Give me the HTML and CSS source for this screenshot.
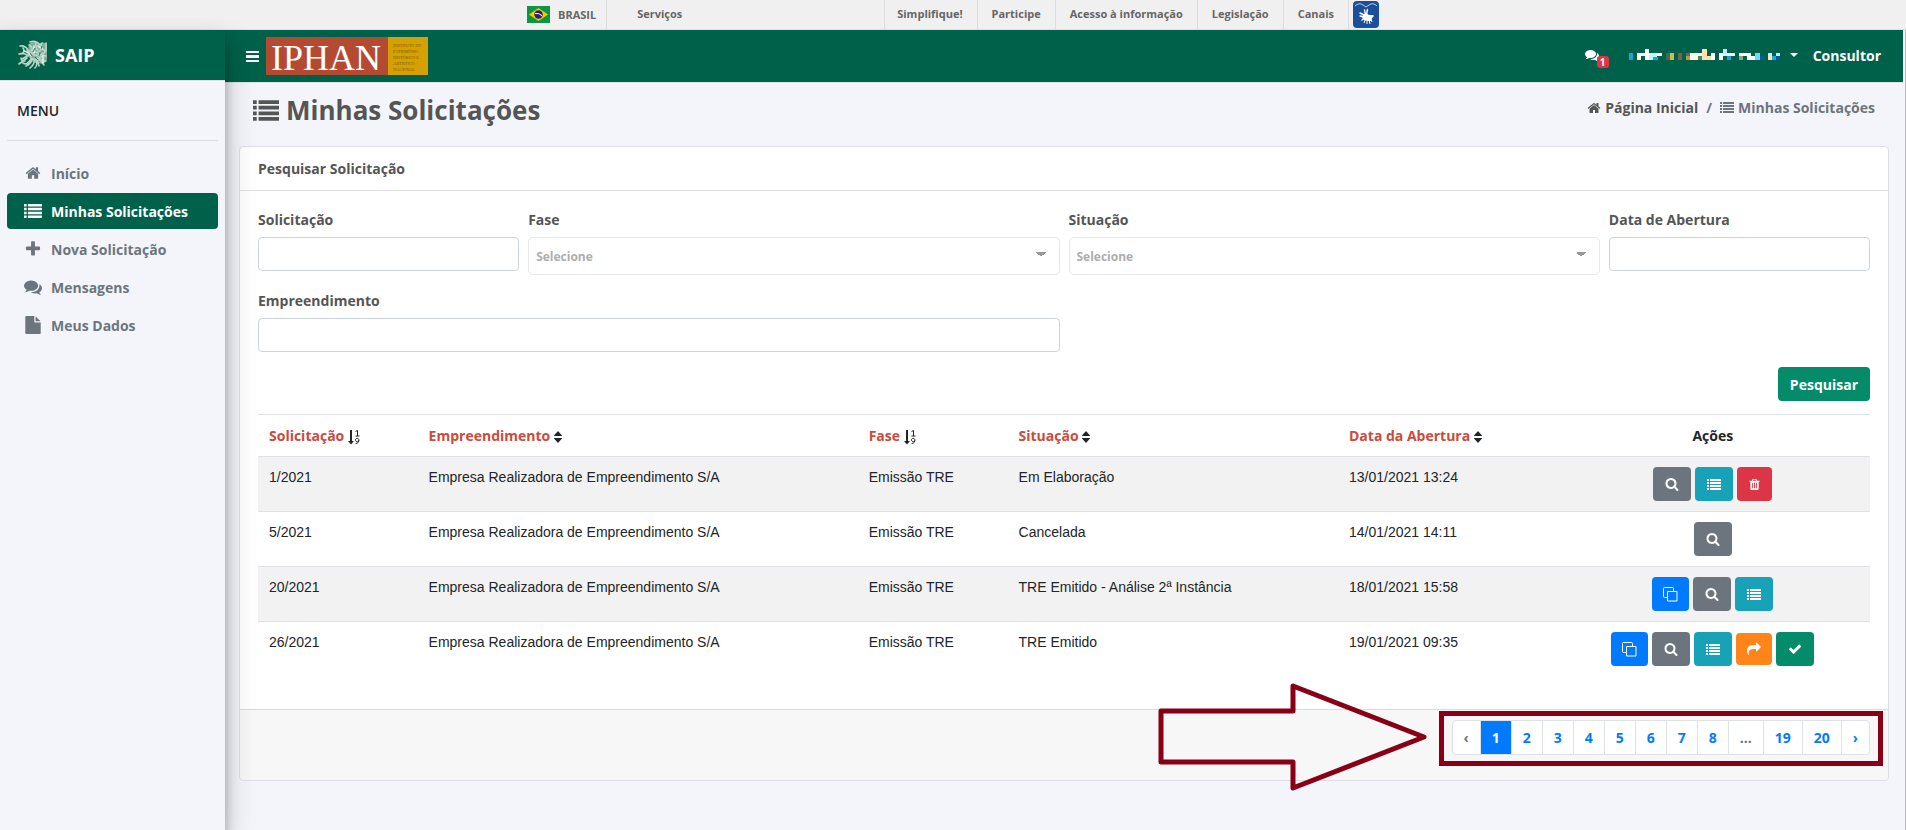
FILE: index.html
```html
<!DOCTYPE html>
<html lang="pt-BR">
<head>
<meta charset="utf-8">
<meta name="viewport" content="width=device-width, initial-scale=1">
<title>SAIP - Minhas Solicitações</title>
<link rel="stylesheet" href="styles.css">
</head>
<body>
<svg class="sprite" aria-hidden="true">
  <symbol id="i-list" viewBox="0 0 28 22"><path d="M0 0h4v4H0zM6 0h22v4H6zM0 6h4v4H0zM6 6h22v4H6zM0 12h4v4H0zM6 12h22v4H6zM0 18h4v4H0zM6 18h22v4H6z"/></symbol>
  <symbol id="i-bars" viewBox="0 0 13 11"><path d="M0 0h13v2H0zM0 4h13v3H0zM0 9h13v2H0z"/></symbol>
  <symbol id="i-home" viewBox="0 0 1792 1792"><path d="M1472 992v480q0 26-19 45t-45 19h-384v-384h-256v384h-384q-26 0-45-19t-19-45v-480q0-1 .5-3t.5-3l575-474 575 474q1 2 1 6zm223-69l-62 74q-8 9-21 11h-3q-13 0-21-7l-692-577-692 577q-12 8-24 7-13-2-21-11l-62-74q-8-10-7-23.500t11-21.500l719-599q32-26 76-26t76 26l244 204v-195q0-14 9-23t23-9h192q14 0 23 9t9 23v408l219 182q10 8 11 21.500t-7 23.500z"/></symbol>
  <symbol id="i-plus" viewBox="0 0 1792 1792"><path d="M1600 736v192q0 40-28 68t-68 28h-416v416q0 40-28 68t-68 28h-192q-40 0-68-28t-28-68v-416h-416q-40 0-68-28t-28-68v-192q0-40 28-68t68-28h416v-416q0-40 28-68t68-28h192q40 0 68 28t28 68v416h416q40 0 68 28t28 68z"/></symbol>
  <symbol id="i-comments" viewBox="0 0 1792 1792"><path d="M1408 768q0 139-94 257t-256.500 186.500-353.500 68.500q-86 0-176-16-124 88-278 128-36 9-86 16h-3q-11 0-20.500-8t-11.500-21q-1-3-1-6.500t.5-6.500 2-6l2.500-5 3.500-5.500 4-5 4.500-5 4-4.500q5-6 23-25t26-29.500 22.500-29 25-38.500 20.500-44q-124-72-195-177t-71-224q0-139 94-257t256.500-186.500 353.500-68.500 353.500 68.500 256.500 186.500 94 257zm384 256q0 120-71 224.500t-195 176.500q10 24 20.500 44t25 38.500 22.500 29 26 29.500 23 25q1 1 4 4.500t4.500 5 4 5 3.500 5.500l2.500 5 2 6 .5 6.500-1 6.500q-3 14-13 22t-22 7q-50-7-86-16-154-40-278-128-90 16-176 16-271 0-472-132 58 4 88 4 161 0 309-45t264-129q125-92 192-212t67-254q0-77-23-152 129 71 204 178t75 230z"/></symbol>
  <symbol id="i-file" viewBox="0 0 1792 1792"><path d="M1152 512v-472q22 14 36 28l408 408q14 14 28 36zm-128 32q0 40 28 68t68 28h544v1056q0 40-28 68t-68 28h-1344q-40 0-68-28t-28-68v-1600q0-40 28-68t68-28h800z"/></symbol>
  <symbol id="i-search" viewBox="0 0 1792 1792"><path d="M1216 832q0-185-131.500-316.500t-316.500-131.500-316.500 131.500-131.500 316.500 131.500 316.500 316.500 131.500 316.500-131.500 131.500-316.500zm512 832q0 52-38 90t-90 38q-54 0-90-38l-343-342q-179 124-399 124-143 0-273.500-55.500t-225-150-150-225-55.500-273.500 55.500-273.500 150-225 225-150 273.500-55.500 273.500 55.500 225 150 150 225 55.500 273.500q0 220-124 399l343 343q37 37 37 90z"/></symbol>
  <symbol id="i-trash" viewBox="0 0 1792 1792"><path d="M704 1376v-704q0-14-9-23t-23-9h-64q-14 0-23 9t-9 23v704q0 14 9 23t23 9h64q14 0 23-9t9-23zm256 0v-704q0-14-9-23t-23-9h-64q-14 0-23 9t-9 23v704q0 14 9 23t23 9h64q14 0 23-9t9-23zm256 0v-704q0-14-9-23t-23-9h-64q-14 0-23 9t-9 23v704q0 14 9 23t23 9h64q14 0 23-9t9-23zm-544-992h448l-48-117q-7-9-17-11h-317q-10 2-17 11zm928 32v64q0 14-9 23t-23 9h-96v948q0 83-47 143.500t-113 60.500h-832q-66 0-113-58.500t-47-141.500v-952h-96q-14 0-23-9t-9-23v-64q0-14 9-23t23-9h309l70-167q15-37 54-63t79-26h320q40 0 79 26t54 63l70 167h309q14 0 23 9t9 23z"/></symbol>
  <symbol id="i-share" viewBox="0 0 1792 1792"><path d="M1792 640q0 26-19 45l-512 512q-19 19-45 19t-45-19-19-45v-256h-224q-98 0-175.500 6t-154 21.500-133 42.500-105.500 69.500-80 101-48.500 138.500-17.500 181q0 55 5 123 0 6 2.500 23.500t2.500 26.500q0 15-8.500 25t-23.500 10q-16 0-28-17-7-9-13-22t-13.500-30-10.500-24q-127-285-127-451 0-199 53-333 162-403 875-403h224v-256q0-26 19-45t45-19 45 19l512 512q19 19 19 45z"/></symbol>
  <symbol id="i-check" viewBox="0 0 1792 1792"><path d="M1671 566q0 40-28 68l-724 724-136 136q-28 28-68 28t-68-28l-136-136-362-362q-28-28-28-68t28-68l136-136q28-28 68-28t68 28l294 295 656-657q28-28 68-28t68 28l136 136q28 28 28 68z"/></symbol>
  <symbol id="i-clone" viewBox="0 0 15 15"><path d="M4.500 4.500h9.500v9.500H4.500zM4 10.500H1.500a1 1 0 0 1-1-1v-8a1 1 0 0 1 1-1h8a1 1 0 0 1 1 1V4" fill="none" stroke="currentColor"/></symbol>
  <symbol id="i-sort" viewBox="0 0 8 12"><path d="M4 0l4 4.500v.5H0v-.5zM4 12L8 7.500V7H0v.5z"/></symbol>
  <symbol id="i-numeric" viewBox="0 0 12 15"><path d="M2 0h2v11h2L3 14.500 0 11h2z"/><path d="M7.500 1.500L9.500.5V6M7.500 6h4M10.800 10.500a1.700 1.700 0 1 1 0-1c.3 2-.6 4-3.200 4" fill="none" stroke="currentColor"/></symbol>
</svg>

<header class="gov">
  <nav class="gov-inner" aria-label="Barra Brasil">
    <a class="gov-brasil" href="#">
      <svg class="flag" viewBox="0 0 23 17" aria-hidden="true"><rect width="23" height="17" fill="#0a9646"/><path d="M2 8.500L11.500 2 21 8.500 11.500 15z" fill="#fcc800"/><circle cx="11.500" cy="8.500" r="4.200" fill="#2b1f78"/><path d="M8 7.500q4-.8 7 2.200" stroke="#fff" fill="none"/></svg>
      BRASIL</a>
    <a class="gov-servicos" href="#">Serviços</a>
    <a class="gov-link" href="#">Simplifique!</a>
    <a class="gov-link" href="#">Participe</a>
    <a class="gov-link" href="#">Acesso à informação</a>
    <a class="gov-link" href="#">Legislação</a>
    <a class="gov-link" href="#">Canais</a>
    <a class="gov-libras" href="#" aria-label="VLibras">
      <svg class="libras" viewBox="0 0 26 27" aria-hidden="true"><rect width="26" height="27" rx="4" fill="#1b4f9c"/><path d="M2 5q4-4 8-1l3 2 3-2q4-3 8 1" stroke="#b9cbe6" fill="none"/><path d="M11.500 9l1 5M14.500 8.500l-1 5M7 12l4 2M7 15l4 1M9 19l4-3" stroke="#fff" stroke-width="1.400" fill="none" stroke-linecap="round"/><path d="M10 14l3-2 3 2 4 0 1 1-2 2-1 3-4 0-3-1-2-2z" fill="#fff"/><path d="M12 19l-1 3M14 20l0 3M16 19l1 4M18 18l1 3" stroke="#fff" fill="none"/></svg>
    </a>
  </nav>
</header>

<div class="app">
  <aside class="sidebar">
    <a class="brand" href="#">
      <svg class="crest" viewBox="0 0 30 30" aria-hidden="true"><path d="M11 4q5-4 9 0 5-3 9 0v14q0 4-4 6l-6-1q-5 0-7-5l-4-3 2-5z" fill="#7fae9d"/><g fill="none" stroke="#b9d3c8" stroke-width="1.600" stroke-linecap="round"><path d="M12 2q6-2 10 3M11 5q4 2 3 6M18 3q-1 5 2 8M24 3q-3 4 3 8M28 3v8M2 6q5-1 8 4M5 8q3 4-2 6M1 14q5-2 9 2M9 10l6 4M13 10l7 3M23 8l-3 8M27 12l-6 4M28 16q-4-1-7 3M28 21q-5 0-7-3M26 25l-5-6M11 15l-7 4M9 18l-8 6M3 18q0 3 4 3M5 23q4 3 8-4M8 26q5-2 6-7M12 28q5-4 4-8M17 28q3-3 1-8M21 26l-2-7M14 14q3 2 6 1M13 18q4 3 7 0"/><path d="M6 11q5 1 7 5M25 15v8M16 6v7M20 6l4 3" stroke="#e4efea"/></g><path d="M17 8l-2 4M22 12l-1 4M24 6l-1 3M17 17l3 3M12 13l2 3" stroke="#2c7c64" fill="none"/></svg>
      <span>SAIP</span></a>
    <h2 class="menu-title">MENU</h2>
    <nav class="menu" aria-label="Menu">
      <a class="menu-item" href="#"><svg class="icon i16"><use href="#i-home"/></svg>Início</a>
      <a class="menu-item active" href="#" aria-current="page"><svg class="icon i-list-md"><use href="#i-list"/></svg>Minhas Solicitações</a>
      <a class="menu-item" href="#"><svg class="icon i18"><use href="#i-plus"/></svg>Nova Solicitação</a>
      <a class="menu-item" href="#"><svg class="icon i18"><use href="#i-comments"/></svg>Mensagens</a>
      <a class="menu-item" href="#"><svg class="icon i18"><use href="#i-file"/></svg>Meus Dados</a>
    </nav>
  </aside>

  <div class="main">
    <div class="topbar">
      <button class="burger" type="button" aria-label="Alternar menu"><svg class="i-bars"><use href="#i-bars"/></svg></button>
      <a class="iphan-link" href="#">
        <svg class="iphan" viewBox="0 0 162 38" role="img" aria-label="IPHAN">
          <rect width="122" height="38" fill="#b54a33"/><rect x="122" width="40" height="38" fill="#d6a000"/>
          <text x="5" y="33" class="iphan-name">IPHAN</text>
          <g class="iphan-small"><text x="127" y="10">Instituto do</text><text x="127" y="16">Patrimônio</text><text x="127" y="22">Histórico e</text><text x="127" y="28">Artístico</text><text x="127" y="34">Nacional</text></g>
        </svg></a>
      <div class="user">
        <a class="notes" href="#" aria-label="Mensagens"><svg class="i14"><use href="#i-comments"/></svg><span class="badge">1</span></a>
        <button class="user-menu" type="button" aria-label="Usuário">
          <svg class="mosaic" viewBox="0 0 152 12" shape-rendering="crispEdges" aria-hidden="true"><path fill="#fff" d="M8 4h8v3H8zM16 0h4v11h-4zM28 4h5v3h-5zM57 4h4v3h-4zM69 4h4v3h-4zM82 4h4v7h-4zM90 4h4v7h-4zM98 4h8v3h-8zM110 4h12v3h-12zM118 7h8v4h-8zM126 4h4v3h-4z"/><path fill="#fffbe0" d="M8 7h4v4H8zM61 4h8v7h-8z"/><path fill="#c0f4ff" d="M20 4h8v4h-8zM20 8h4v3h-4zM94 0h4v7h-4zM139 4h4v3h-4zM147 4h4v3h-4z"/><path fill="#1aa6d4" d="M0 4h4v7H0zM24 8h5v3h-5zM98 7h4v4h-4zM143 7h4v4h-4z"/><path fill="#4d6650" d="M37 4h4v7h-4z"/><path fill="#d0bb45" d="M41 4h4v7h-4z"/><path fill="#7a6248" d="M49 4h4v7h-4zM57 4h4v3h-4z"/><path fill="#b59850" d="M57 7h4v4h-4z"/><path fill="#3c8766" d="M69 7h4v4h-4z"/><path fill="#ffe0b0" d="M73 0h5v11h-5zM78 7h4v4h-4zM139 7h4v4h-4z"/><path fill="#8fa676" d="M110 7h4v4h-4z"/><path fill="#70d8f8" d="M126 4h5v7h-5z"/><path fill="#005a9b" d="M131 7h4v4h-4zM147 7h4v4h-4z"/></svg>
          <span class="caret"></span>
        </button>
        <span>Consultor</span>
      </div>
    </div>

    <div class="page-head">
      <h1><svg class="i-list-xl"><use href="#i-list"/></svg>Minhas Solicitações</h1>
      <nav class="crumbs" aria-label="Navegação">
        <a href="#"><svg class="i14"><use href="#i-home"/></svg>Página Inicial</a>
        <span class="slash">/</span>
        <span class="here"><svg class="i-list-sm"><use href="#i-list"/></svg>Minhas Solicitações</span>
      </nav>
    </div>

    <main class="card">
      <h2 class="card-head">Pesquisar Solicitação</h2>
      <div class="card-body">
        <form class="filters">
          <div class="field c2"><label for="f-sol">Solicitação</label><input id="f-sol" type="text"></div>
          <div class="field c4"><label for="f-fase">Fase</label><select id="f-fase"><option>Selecione</option></select></div>
          <div class="field c4"><label for="f-sit">Situação</label><select id="f-sit"><option>Selecione</option></select></div>
          <div class="field c2"><label for="f-data">Data de Abertura</label><input id="f-data" type="text"></div>
          <div class="field c6"><label for="f-emp">Empreendimento</label><input id="f-emp" type="text"></div>
          <div class="submit"><button class="btn green search" type="submit">Pesquisar</button></div>
        </form>

        <table class="grid">
          <colgroup><col class="w1"><col class="w2"><col class="w3"><col class="w4"><col class="w5"><col></colgroup>
          <thead><tr>
            <th><a href="#">Solicitação</a> <svg class="i-numeric"><use href="#i-numeric"/></svg></th>
            <th><a href="#">Empreendimento</a> <svg class="i-sort"><use href="#i-sort"/></svg></th>
            <th><a href="#">Fase</a> <svg class="i-numeric"><use href="#i-numeric"/></svg></th>
            <th><a href="#">Situação</a> <svg class="i-sort"><use href="#i-sort"/></svg></th>
            <th><a href="#">Data da Abertura</a> <svg class="i-sort"><use href="#i-sort"/></svg></th>
            <th class="center">Ações</th>
          </tr></thead>
          <tbody>
            <tr><td>1/2021</td><td>Empresa Realizadora de Empreendimento S/A</td><td>Emissão TRE</td><td>Em Elaboração</td><td>13/01/2021 13:24</td>
              <td><div class="actions"><button class="btn gray" type="button" aria-label="Visualizar"><svg class="i14"><use href="#i-search"/></svg></button><button class="btn teal" type="button" aria-label="Detalhar"><svg class="i-list-sm"><use href="#i-list"/></svg></button><button class="btn red" type="button" aria-label="Excluir"><svg class="i13"><use href="#i-trash"/></svg></button></div></td></tr>
            <tr><td>5/2021</td><td>Empresa Realizadora de Empreendimento S/A</td><td>Emissão TRE</td><td>Cancelada</td><td>14/01/2021 14:11</td>
              <td><div class="actions"><button class="btn gray" type="button" aria-label="Visualizar"><svg class="i14"><use href="#i-search"/></svg></button></div></td></tr>
            <tr><td>20/2021</td><td>Empresa Realizadora de Empreendimento S/A</td><td>Emissão TRE</td><td>TRE Emitido - Análise 2ª Instância</td><td>18/01/2021 15:58</td>
              <td><div class="actions"><button class="btn blue" type="button" aria-label="Copiar"><svg class="i15"><use href="#i-clone"/></svg></button><button class="btn gray" type="button" aria-label="Visualizar"><svg class="i14"><use href="#i-search"/></svg></button><button class="btn teal" type="button" aria-label="Detalhar"><svg class="i-list-sm"><use href="#i-list"/></svg></button></div></td></tr>
            <tr><td>26/2021</td><td>Empresa Realizadora de Empreendimento S/A</td><td>Emissão TRE</td><td>TRE Emitido</td><td>19/01/2021 09:35</td>
              <td><div class="actions"><button class="btn blue" type="button" aria-label="Copiar"><svg class="i15"><use href="#i-clone"/></svg></button><button class="btn gray" type="button" aria-label="Visualizar"><svg class="i14"><use href="#i-search"/></svg></button><button class="btn teal" type="button" aria-label="Detalhar"><svg class="i-list-sm"><use href="#i-list"/></svg></button><button class="btn orange" type="button" aria-label="Encaminhar"><svg class="i14"><use href="#i-share"/></svg></button><button class="btn green" type="button" aria-label="Aprovar"><svg class="i14"><use href="#i-check"/></svg></button></div></td></tr>
          </tbody>
        </table>
      </div>
      <div class="card-foot">
        <nav class="pager" aria-label="Paginação">
          <ul>
            <li><span>‹</span></li><li><a class="on" href="#" aria-current="page">1</a></li><li><a href="#">2</a></li><li><a href="#">3</a></li><li><a href="#">4</a></li><li><a href="#">5</a></li><li><a href="#">6</a></li><li><a href="#">7</a></li><li><a href="#">8</a></li><li><span>...</span></li><li><a href="#">19</a></li><li><a href="#">20</a></li><li><a href="#">›</a></li>
          </ul>
          <div class="mark-box"></div>
          <svg class="mark-arrow" viewBox="0 0 272 110" aria-hidden="true"><path d="M5 29H137V4L268 55 137 106V80H5z" fill="none" stroke="#880015" stroke-width="5" stroke-linejoin="round"/></svg>
        </nav>
      </div>
    </main>
  </div>
</div>
</body>
</html>
```
FILE: styles.css
```css
* { box-sizing: border-box; }
body {
  margin: 0;
  min-height: 100vh;
  display: flex;
  flex-direction: column;
  background: #f4f5fa;
  color: #555;
  font: 700 14px/21px "Open Sans", sans-serif;
}
a { color: inherit; text-decoration: none; }
h1, h2 { margin: 0; font-weight: 700; }
button, input, select { font: inherit; color: inherit; }
svg { fill: currentColor; flex: none; display: inline-block; vertical-align: middle; }
.sprite { display: none; }

.i13 { width: 13px; height: 13px; }
.i14 { width: 14px; height: 14px; }
.i15 { width: 15px; height: 15px; }
.i16 { width: 16px; height: 16px; }
.i18 { width: 18px; height: 18px; }
.i-list-sm { width: 14px; height: 11px; }
.i-list-md { width: 18px; height: 14px; }
.i-list-xl { width: 26px; height: 21px; }
.i-bars { width: 13px; height: 11px; }
.i-sort { width: 8px; height: 12px; }
.i-numeric { width: 12px; height: 15px; }

/* Government bar */
.gov { background: #f0f0f0; border-bottom: 1px solid #dfdfdf; color: #666; font-size: 11px; }
.gov-inner { display: flex; align-items: stretch; width: 852px; max-width: 100%; height: 29px; margin: 0 auto; line-height: 28px; }
.gov-brasil { display: flex; align-items: center; gap: 8px; padding-right: 10px; border-right: 1px solid #dcdcdc; }
.flag { width: 23px; height: 17px; }
.gov-servicos { flex: 1; padding-left: 30px; }
.gov-link { padding: 0 14px; border-left: 1px solid #dcdcdc; }
.gov-servicos + .gov-link { padding: 0 14px 0 12px; }
.gov-libras { padding: 1px 0 0 4px; border-left: 1px solid #dcdcdc; }
.libras { display: block; width: 26px; height: 27px; }

.app { flex: 1; display: flex; padding-right: 2px; border-right: 1px solid #bbb; }

/* Sidebar */
.sidebar {
  position: relative;
  z-index: 2;
  flex: none;
  width: 225px;
  background: #f4f5fa;
  box-shadow: 0 14px 28px rgba(0, 0, 0, .25), 0 10px 10px rgba(0, 0, 0, .22);
  clip-path: inset(-12px -60px 0 0);
}
.brand { display: flex; align-items: center; gap: 7px; height: 51px; padding-left: 18px; background: #00614a; border-bottom: 1px solid #dee2e6; color: #fff; font-size: 18px; }
.crest { width: 30px; height: 30px; }
.menu-title { margin: 0 7px; padding: 19px 10px; border-bottom: 1px solid #dcdee2; color: #212529; font-size: 14px; font-weight: 600; }
.menu { display: flex; flex-direction: column; gap: 2px; padding: 14px 7px; }
.menu-item { display: flex; align-items: center; gap: 9px; height: 36px; padding-left: 17px; border-radius: 4px; color: #6c757d; }
.menu-item .icon { width: 18px; }
.menu-item.active { background: #00614a; color: #fff; }

.main { flex: 1; min-width: 0; }

/* Top bar */
.topbar { display: flex; align-items: center; height: 53px; padding: 0 22px 0 21px; background: #00614a; border-bottom: 1px solid #dee2e6; color: #fff; }
.burger, .user-menu { display: flex; align-items: center; padding: 0; border: 0; background: none; color: #fff; }
.iphan-link { margin-left: 7px; }
.iphan { display: block; width: 162px; height: 38px; overflow: visible; }
.iphan-name { font: 36px/1 "Liberation Serif", serif; fill: #fff; }
.iphan-small { font: small-caps 5px/1 "Liberation Serif", serif; fill: #7a5a10; }
.user { display: flex; align-items: center; margin-left: auto; padding-bottom: 2px; }
.notes { position: relative; display: flex; margin-right: 30px; }
.badge { position: absolute; left: 12px; top: 8px; width: 12px; height: 12px; border-radius: 3px; background: #dc3545; font-size: 10px; line-height: 12px; text-align: center; }
.user-menu { gap: 9px; margin-right: 15px; }
.mosaic { width: 152px; height: 12px; }
.caret { border: 4px solid transparent; border-top-color: #fff; border-bottom: 0; }

/* Page heading */
.page-head { display: flex; align-items: flex-start; justify-content: space-between; padding: 9px 28px 18px; }
h1 { display: flex; align-items: center; gap: 7px; font-size: 26px; line-height: 36px; }
.crumbs { display: flex; gap: 8px; padding-top: 5px; }
.crumbs a, .here { display: flex; align-items: center; gap: 4px; }
.here, .slash { color: #6c757d; }

/* Card */
.card { margin: 0 14px; border: 1px solid #dfdfe1; border-radius: 4px; background: #fff; }
.card-head { padding: 11px 18px; border-bottom: 1px solid #dfdfe1; font-size: 14px; line-height: 21px; }
.card-body { padding: 18px 18px 33px; }
.filters { display: grid; grid-template-columns: repeat(12, 1fr); column-gap: 9px; row-gap: 15px; }
.field { display: flex; flex-direction: column; gap: 7px; }
.c2 { grid-column: span 2; }
.c4 { grid-column: span 4; }
.c6 { grid-column: span 6; }
.field input { width: 100%; height: 34px; padding: 0 8px; border: 1px solid #ced4da; border-radius: 4px; background: #fff; }
.field select {
  width: 100%; height: 38px; padding: 0 7px; border: 1px solid #e8e8e8; border-radius: 5px; color: #adadad; font-size: 12px; appearance: none;
  background: linear-gradient(to bottom right, #999 50%, transparent 50%) right 13px top 14px / 5px 5px no-repeat,
    linear-gradient(to bottom left, #999 50%, transparent 50%) right 18px top 14px / 5px 5px no-repeat, #fff;
}
.submit { grid-column: 1 / -1; display: flex; justify-content: flex-end; margin-bottom: 13px; }

.btn { display: flex; align-items: center; justify-content: center; height: 34px; padding: 0 12px; border: 0; border-radius: 4px; color: #fff; }
.green { background: #048b69; }
.gray { background: #6c757d; }
.teal { background: #17a2b8; }
.red { background: #dc3545; padding: 0 11px; }
.blue { background: #007bff; padding: 0 11px; }
.orange { background: #ff851b; height: 32px; padding: 0 11px; }
.actions { display: flex; align-items: center; justify-content: center; gap: 4px; }

/* Results table */
.grid { width: 100%; border-collapse: collapse; table-layout: fixed; color: #212529; }
.w1 { width: 9.9%; }
.w2 { width: 27.3%; }
.w3 { width: 9.3%; }
.w4 { width: 20.5%; }
.w5 { width: 13.5%; }
.grid th, .grid td { padding: 10px 11px; border-top: 1px solid #dee2e6; text-align: left; vertical-align: top; }
.grid th { white-space: nowrap; }
.grid th a { color: #cb4b3d; }
.grid .center { text-align: center; }
.grid td { font-family: "Liberation Sans", Arial, sans-serif; font-weight: 400; }
.grid tbody tr:nth-child(odd) { background: #f2f2f2; }

/* Pagination */
.card-foot { display: flex; justify-content: flex-end; padding: 10px 18px 25px; border-top: 1px solid #dbdbdb; background: #f7f7f7; border-radius: 0 0 4px 4px; }
.pager { position: relative; }
.pager ul { display: flex; margin: 0; padding: 0; list-style: none; border: 1px solid #dee2e6; border-radius: 4px; background: #fff; overflow: hidden; }
.pager li + li { border-left: 1px solid #dee2e6; }
.pager li a, .pager li span { display: block; padding: 6px 11px; color: #007bff; }
.pager li span { color: #6c757d; }
.pager li .on { background: #007bff; color: #fff; }
.mark-box { position: absolute; inset: -9px -13px -11px -13px; border: 5px solid #880015; }
.mark-arrow { position: absolute; right: 442px; top: -38px; width: 272px; height: 110px; }
```
